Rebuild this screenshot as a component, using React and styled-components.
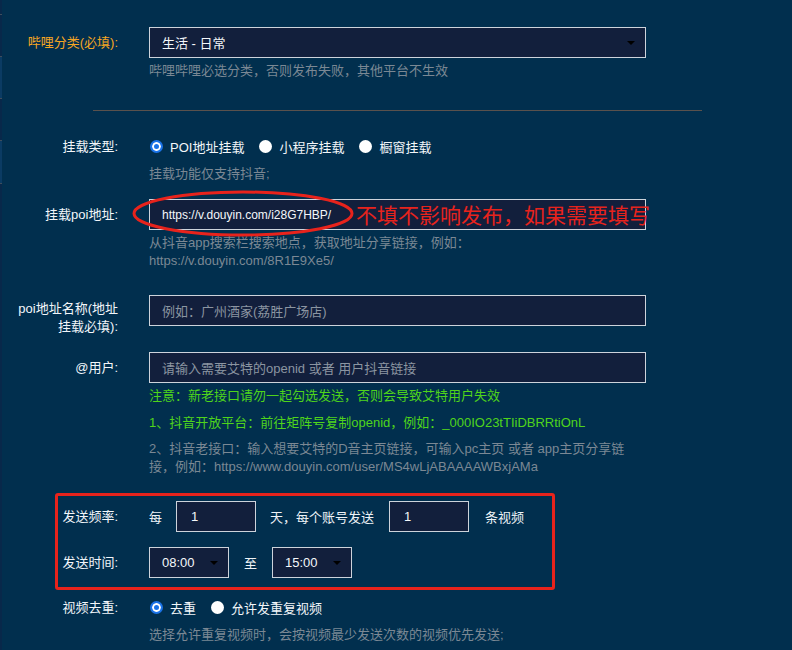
import React from 'react';
import styled, { createGlobalStyle } from 'styled-components';

const Global = createGlobalStyle`
  html, body {
    margin: 0;
    padding: 0;
    background: #012f4e;
  }
  body {
    font-family: "Liberation Sans", "Noto Sans CJK SC", sans-serif;
    font-size: 13px;
    color: #eef3f7;
  }
`;

const Page = styled.div`
  display: flex;
  width: 792px;
  height: 650px;
  overflow: hidden;
  background: #012f4e;
`;

const Sidebar = styled.div`
  width: 2px;
  flex: none;
  display: flex;
  flex-direction: column;
  background: #08284a;
`;

const SideItem = styled.div`
  height: ${p => p.h}px;
  flex: none;
  background: ${p => (p.light ? '#0b3b63' : '#08284a')};
  border-bottom: 1px solid #3d4d5c;
`;

const Main = styled.div`
  flex: 1;
  padding: 27px 0 0 16px;
`;

const Field = styled.div`
  display: grid;
  grid-template-columns: ${p => p.labelWidth || 100}px 497px;
  column-gap: 31px;
  margin-top: ${p => p.top || 0}px;
`;

const Label = styled.div`
  text-align: right;
  line-height: ${p => (p.multiline ? '18px' : '31px')};
  padding-top: ${p => (p.multiline ? '5px' : '0')};
  color: ${p => p.color || '#f2f6fa'};
  white-space: ${p => (p.multiline ? 'normal' : 'nowrap')};
`;

const Control = styled.div`
  display: flex;
  flex-direction: column;
  position: relative;
`;

const Select = styled.div`
  box-sizing: border-box;
  width: ${p => p.width || 497}px;
  height: 31px;
  border: 1px solid #cdd3db;
  background: #121f3c;
  padding: 0 12px;
  display: flex;
  align-items: center;
  justify-content: space-between;
  color: #f4f7fa;
  flex: none;
`;

const Arrow = styled.span`
  width: 0;
  height: 0;
  border-left: 4px solid transparent;
  border-right: 4px solid transparent;
  border-top: 4px solid #000;
  margin-right: -2px;
  margin-top: 1px;
`;

const Input = styled.div`
  box-sizing: border-box;
  width: ${p => p.width || 497}px;
  height: 31px;
  border: 1px solid #cdd3db;
  background: #121f3c;
  padding: 0 ${p => p.pad || 12}px;
  display: flex;
  align-items: center;
  color: ${p => (p.placeholder ? '#8b95a1' : '#f4f7fa')};
  font-size: ${p => p.size || 13}px;
  flex: none;
  white-space: nowrap;
`;

const Help = styled.div`
  margin-top: ${p => p.top || 4}px;
  line-height: 18px;
  color: ${p => (p.green ? '#4fd41b' : '#7b8894')};
  max-width: 482px;
`;

const Divider = styled.div`
  margin: 30px 0 0 75px;
  width: 609px;
  height: 1px;
  background: #5a514c;
`;

const RadioGroup = styled.div`
  display: flex;
  align-items: center;
  height: 30px;
  gap: 14px;
`;

const RadioItem = styled.label`
  display: flex;
  align-items: center;
  gap: 7px;
  color: #f2f6f9;
  white-space: nowrap;
`;

const Dot = styled.span`
  box-sizing: border-box;
  width: 13px;
  height: 13px;
  border-radius: 50%;
  background: ${p => (p.checked ? '#1a73e8' : '#ffffff')};
  border: ${p => (p.checked ? '2px solid #1a73e8' : 'none')};
  box-shadow: ${p => (p.checked ? 'inset 0 0 0 2px #fff' : 'none')};
  margin-left: 1px;
`;

const Ring = styled.svg`
  position: absolute;
  left: -17px;
  top: -9px;
  width: 222px;
  height: 47px;
  pointer-events: none;
`;

const Note = styled.div`
  position: absolute;
  left: 207px;
  top: 0;
  line-height: 31px;
  font-size: 21px;
  color: #e8231c;
  white-space: nowrap;
  font-family: "Noto Sans CJK SC", sans-serif;
  font-weight: 400;
`;

const Frame = styled.div`
  box-sizing: border-box;
  margin: 17px 0 0 37px;
  width: 500px;
  border: 3px solid #e8231c;
  border-radius: 3px;
  padding: 5px 0 9px;
`;

const Inline = styled.div`
  display: flex;
  align-items: center;
  height: 31px;
  white-space: nowrap;
`;

const Word = styled.span`
  margin: 0 ${p => p.right || 14}px 0 ${p => p.left || 0}px;
  color: #eef3f7;
`;

function Radio({ checked, children }) {
  return (
    <RadioItem>
      <Dot checked={checked} />
      {children}
    </RadioItem>
  );
}

const sideItems = [
  { h: 14, light: false },
  { h: 41, light: false },
  { h: 41, light: true },
  { h: 41, light: false },
  { h: 42, light: true },
];

export default function App() {
  return (
    <Page>
      <Global />
      <Sidebar>
        {sideItems.map((s, i) => (
          <SideItem key={i} h={s.h} light={s.light} />
        ))}
      </Sidebar>
      <Main>
        <Field>
          <Label color="#f5a623">哔哩分类(必填):</Label>
          <Control>
            <Select>
              生活 - 日常
              <Arrow />
            </Select>
            <Help>哔哩哔哩必选分类，否则发布失败，其他平台不生效</Help>
          </Control>
        </Field>

        <Divider />

        <Field top={20}>
          <Label>挂载类型:</Label>
          <Control>
            <RadioGroup>
              <Radio checked>POI地址挂载</Radio>
              <Radio>小程序挂载</Radio>
              <Radio>橱窗挂载</Radio>
            </RadioGroup>
            <Help>挂载功能仅支持抖音;</Help>
          </Control>
        </Field>

        <Field top={16}>
          <Label>挂载poi地址:</Label>
          <Control>
            <Input size={12}>https://v.douyin.com/i28G7HBP/</Input>
            <Ring viewBox="0 0 222 47">
              <ellipse cx="111" cy="23.5" rx="109" ry="21.5" fill="none" stroke="#e8231c" strokeWidth="3" />
            </Ring>
            <Note>不填不影响发布，如果需要填写</Note>
            <Help>
              从抖音app搜索栏搜索地点，获取地址分享链接，例如：<br />
              https://v.douyin.com/8R1E9Xe5/
            </Help>
          </Control>
        </Field>

        <Field top={25}>
          <Label multiline>poi地址名称(地址挂载必填):</Label>
          <Control>
            <Input placeholder="true">例如：广州酒家(荔胜广场店)</Input>
          </Control>
        </Field>

        <Field top={16}>
          <Label>@用户:</Label>
          <Control>
            <Input placeholder="true">请输入需要艾特的openid 或者 用户抖音链接</Input>
            <Help green>注意：新老接口请勿一起勾选发送，否则会导致艾特用户失效</Help>
            <Help green top={9}>1、抖音开放平台：前往矩阵号复制openid，例如：_000IO23tTIiDBRRtiOnL</Help>
            <Help top={8}>
              2、抖音老接口：输入想要艾特的D音主页链接，可输入pc主页 或者 app主页分享链<br />
              接，例如：https://www.douyin.com/user/MS4wLjABAAAAWBxjAMa
            </Help>
          </Control>
        </Field>

        <Frame>
          <Field labelWidth={60}>
            <Label>发送频率:</Label>
            <Inline>
              <Word>每</Word>
              <Input width={80} pad={14}>1</Input>
              <Word left={14} right={15}>天，每个账号发送</Word>
              <Input width={80} pad={14}>1</Input>
              <Word left={16}>条视频</Word>
            </Inline>
          </Field>
          <Field labelWidth={60} top={15}>
            <Label>发送时间:</Label>
            <Inline>
              <Select width={80}>
                08:00
                <Arrow />
              </Select>
              <Word left={15} right={15}>至</Word>
              <Select width={80}>
                15:00
                <Arrow />
              </Select>
            </Inline>
          </Field>
        </Frame>

        <Field top={2}>
          <Label>视频去重:</Label>
          <Control>
            <RadioGroup>
              <Radio checked>去重</Radio>
              <Radio>允许发重复视频</Radio>
            </RadioGroup>
            <Help>选择允许重复视频时，会按视频最少发送次数的视频优先发送;</Help>
          </Control>
        </Field>
      </Main>
    </Page>
  );
}
